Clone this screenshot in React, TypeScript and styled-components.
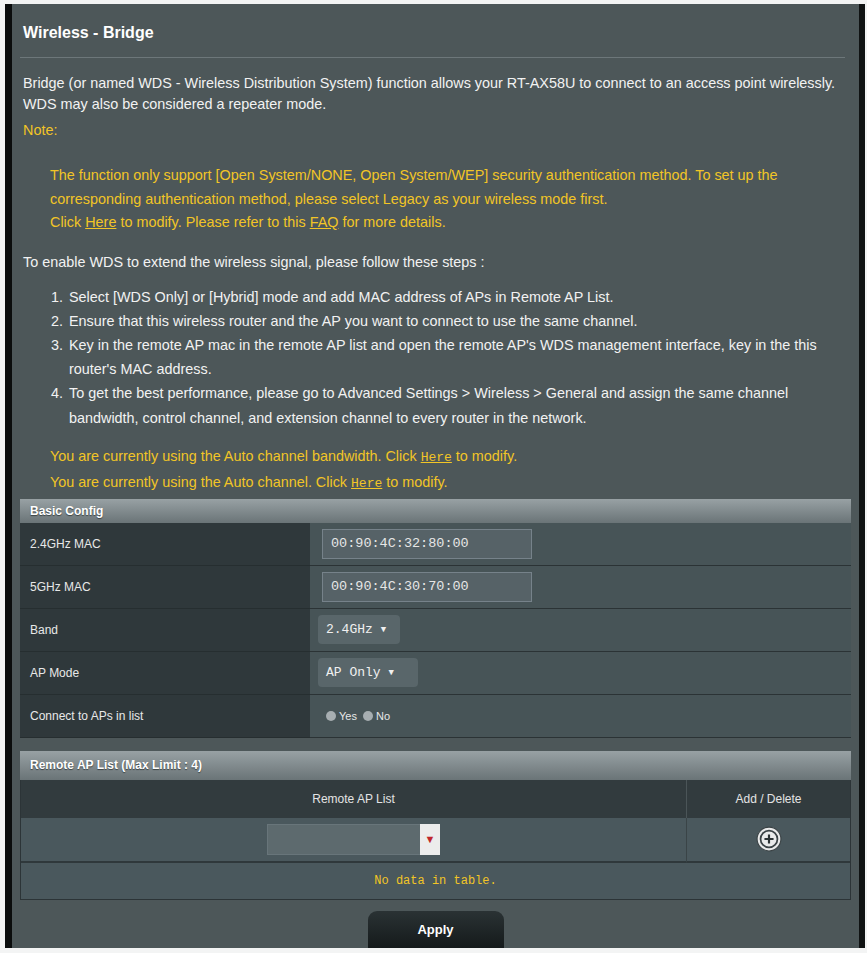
import styled, { createGlobalStyle } from "styled-components";

const GlobalStyle = createGlobalStyle`
  html, body {
    margin: 0;
    padding: 0;
    background: #f3f4f4;
  }
  body {
    font-family: "Liberation Sans", Arial, sans-serif;
  }
`;

const Page = styled.div`
  padding: 4px 2px 5px 5px;
`;

const Panel = styled.div`
  box-sizing: border-box;
  width: 860px;
  background: #4d5759;
  border-left: 7px solid #0b0d0d;
  border-right: 6px solid #101313;
  padding: 19px 8px 0 8px;
  color: #f2f2f2;
  font-size: 14.4px;
`;

const Title = styled.h1`
  margin: 0;
  padding-left: 3px;
  font-size: 16px;
  line-height: 20px;
  font-weight: bold;
  color: #ffffff;
`;

const Divider = styled.hr`
  margin: 14px 6px 0 0;
  border: 0;
  height: 1px;
  background: #6d777a;
`;

const Para = styled.p<{ $mt: number; $lh?: number; $indent?: number; $yellow?: boolean }>`
  margin: ${(p) => p.$mt}px 0 0 0;
  padding-left: ${(p) => 3 + (p.$indent ?? 0)}px;
  line-height: ${(p) => p.$lh ?? 21}px;
  color: ${(p) => (p.$yellow ? "#f2c526" : "#f2f2f2")};
  a {
    color: inherit;
    text-decoration: underline;
  }
`;

const Mono = styled.span`
  font-family: "Liberation Mono", "DejaVu Sans Mono", monospace;
  font-size: 13px;
`;

const Steps = styled.ol`
  margin: 12px 0 0 0;
  padding-left: 47px;
  line-height: 24.2px;
  li {
    padding-left: 2px;
  }
`;

const SectionBar = styled.div<{ $mt: number; $h: number }>`
  margin-top: ${(p) => p.$mt}px;
  height: ${(p) => p.$h}px;
  display: flex;
  align-items: center;
  padding-left: 10px;
  background: linear-gradient(#98a1a4, #6a7477);
  color: #ffffff;
  font-weight: bold;
  font-size: 12px;
  text-shadow: 0 1px 1px #3a4244;
`;

const ConfigTable = styled.div`
  display: grid;
  grid-template-columns: 290px 1fr;
`;

const LabelCell = styled.div`
  height: 42px;
  display: flex;
  align-items: center;
  padding-left: 10px;
  background: #2f383b;
  border-bottom: 1px solid #262e30;
  font-size: 12px;
  color: #e8e8e8;
`;

const ValueCell = styled.div`
  height: 42px;
  display: flex;
  align-items: center;
  padding-left: 8px;
  background: #475457;
  border-bottom: 1px solid #2b3335;
  font-size: 12px;
`;

const MacInput = styled.div`
  margin-left: 4px;
  width: 200px;
  height: 28px;
  display: flex;
  align-items: center;
  padding-left: 8px;
  background: #566267;
  border: 1px solid #76828a;
  font-family: "Liberation Mono", "DejaVu Sans Mono", monospace;
  font-size: 13.5px;
  color: #e6e6e6;
`;

const SelectBox = styled.div<{ $w: number }>`
  width: ${(p) => p.$w}px;
  height: 29px;
  box-sizing: border-box;
  display: flex;
  align-items: center;
  gap: 8px;
  padding-left: 8px;
  background: #59666a;
  border-radius: 4px;
  font-family: "Liberation Mono", "DejaVu Sans Mono", monospace;
  font-size: 13px;
  color: #f0f0f0;
  span.caret {
    font-size: 9px;
  }
`;

const Radio = styled.span`
  display: inline-flex;
  align-items: center;
  gap: 3px;
  margin-right: 6px;
  font-size: 11px;
  color: #e8e8e8;
  &::before {
    content: "";
    width: 10px;
    height: 10px;
    border-radius: 50%;
    background: #a7aeb1;
  }
`;

const ApTable = styled.div`
  display: grid;
  grid-template-columns: 666px 1fr;
  border: 1px solid #2c3437;
  border-top: 0;
`;

const HeadCell = styled.div<{ $divider?: boolean }>`
  height: 38px;
  display: flex;
  align-items: center;
  justify-content: center;
  background: #323b3e;
  font-size: 12px;
  color: #e4e4e4;
  border-right: ${(p) => (p.$divider ? "1px solid #4b5558" : "0")};
`;

const BodyCell = styled.div<{ $divider?: boolean }>`
  height: 43px;
  display: flex;
  align-items: center;
  justify-content: center;
  background: #4a585d;
  border-right: ${(p) => (p.$divider ? "1px solid #3a4447" : "0")};
  border-bottom: 2px solid #2f383b;
`;

const EmptyRow = styled.div`
  grid-column: 1 / -1;
  height: 36px;
  display: flex;
  align-items: center;
  justify-content: center;
  background: #4a585d;
  font-family: "Liberation Mono", "DejaVu Sans Mono", monospace;
  font-size: 12px;
  color: #f2c526;
`;

const ApSelect = styled.div`
  display: flex;
  height: 31px;
`;

const ApSelectField = styled.div`
  width: 152px;
  background: #5d6a6e;
  border: 1px solid #68757a;
  border-right: 0;
`;

const ApSelectArrow = styled.div`
  width: 20px;
  background: #ececec;
  display: flex;
  align-items: center;
  justify-content: center;
  color: #c0262b;
  font-size: 11px;
`;

const Footer = styled.div`
  display: flex;
  justify-content: center;
  padding: 11px 0 0 0;
`;

const ApplyButton = styled.button`
  width: 136px;
  height: 37px;
  border: 0;
  border-radius: 9px 9px 0 0;
  background: linear-gradient(#2a3234, #151a1b);
  color: #ffffff;
  font-family: "Liberation Sans", Arial, sans-serif;
  font-weight: bold;
  font-size: 13px;
`;

function PlusIcon() {
  return (
    <svg width="26" height="26" viewBox="0 0 24 24">
      <circle cx="12" cy="12" r="11" fill="#e9eaea" stroke="#3a4245" strokeWidth="1" />
      <circle cx="12" cy="12" r="7.8" fill="none" stroke="#3a4245" strokeWidth="1.6" />
      <path d="M12 7.8v8.4M7.8 12h8.4" stroke="#2c3335" strokeWidth="2" />
    </svg>
  );
}

export default function App() {
  return (
    <Page>
      <GlobalStyle />
      <Panel>
        <Title>Wireless - Bridge</Title>
        <Divider />
        <Para $mt={15}>
          Bridge (or named WDS - Wireless Distribution System) function allows your RT-AX58U to connect to an access point wirelessly.
          <br />
          WDS may also be considered a repeater mode.
        </Para>
        <Para $mt={5} $yellow>
          Note:
        </Para>
        <Para $mt={23} $lh={23.5} $indent={27} $yellow>
          The function only support [Open System/NONE, Open System/WEP] security authentication method. To set up the
          <br />
          corresponding authentication method, please select Legacy as your wireless mode first.
          <br />
          Click <a>Here</a> to modify. Please refer to this <a>FAQ</a> for more details.
        </Para>
        <Para $mt={17}>To enable WDS to extend the wireless signal, please follow these steps :</Para>
        <Steps>
          <li>Select [WDS Only] or [Hybrid] mode and add MAC address of APs in Remote AP List.</li>
          <li>Ensure that this wireless router and the AP you want to connect to use the same channel.</li>
          <li>
            Key in the remote AP mac in the remote AP list and open the remote AP's WDS management interface, key in the this
            <br />
            router's MAC address.
          </li>
          <li>
            To get the best performance, please go to Advanced Settings &gt; Wireless &gt; General and assign the same channel
            <br />
            bandwidth, control channel, and extension channel to every router in the network.
          </li>
        </Steps>
        <Para $mt={14} $lh={24} $indent={27} $yellow>
          You are currently using the Auto channel bandwidth. Click <a><Mono>Here</Mono></a> to modify.
          <br />
          You are currently using the Auto channel. Click <a><Mono>Here</Mono></a> to modify.
        </Para>

        <SectionBar $mt={3} $h={24}>Basic Config</SectionBar>
        <ConfigTable>
          <LabelCell>2.4GHz MAC</LabelCell>
          <ValueCell>
            <MacInput>00:90:4C:32:80:00</MacInput>
          </ValueCell>
          <LabelCell>5GHz MAC</LabelCell>
          <ValueCell>
            <MacInput>00:90:4C:30:70:00</MacInput>
          </ValueCell>
          <LabelCell>Band</LabelCell>
          <ValueCell>
            <SelectBox $w={82}>
              2.4GHz <span className="caret">▼</span>
            </SelectBox>
          </ValueCell>
          <LabelCell>AP Mode</LabelCell>
          <ValueCell>
            <SelectBox $w={100}>
              AP Only <span className="caret">▼</span>
            </SelectBox>
          </ValueCell>
          <LabelCell>Connect to APs in list</LabelCell>
          <ValueCell>
            <Radio style={{ marginLeft: 8 }}>Yes</Radio>
            <Radio>No</Radio>
          </ValueCell>
        </ConfigTable>

        <SectionBar $mt={13} $h={29}>Remote AP List (Max Limit : 4)</SectionBar>
        <ApTable>
          <HeadCell $divider>Remote AP List</HeadCell>
          <HeadCell>Add / Delete</HeadCell>
          <BodyCell $divider>
            <ApSelect>
              <ApSelectField />
              <ApSelectArrow>▼</ApSelectArrow>
            </ApSelect>
          </BodyCell>
          <BodyCell>
            <PlusIcon />
          </BodyCell>
          <EmptyRow>No data in table.</EmptyRow>
        </ApTable>
        <Footer>
          <ApplyButton>Apply</ApplyButton>
        </Footer>
      </Panel>
    </Page>
  );
}
